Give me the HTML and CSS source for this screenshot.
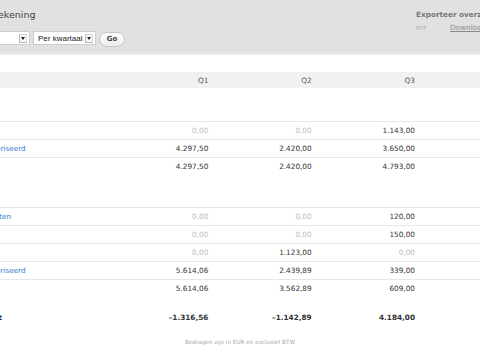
FILE: index.html
```html
<!DOCTYPE html>
<html lang="nl">

<head>
    <meta charset="UTF-8">
    <meta name="viewport" content="width=device-width, initial-scale=1.0">
    <title>Winst- en verliesrekening</title>
    <link rel="stylesheet" href="styles.css">
</head>

<body>
    <div class="page">
        <!-- Top bar with filters and export -->
        <header class="top">
            <div class="top-main">
                <h1 class="title">Winst- en verliesrekening</h1>
                <div class="filters">
                    <span class="select select-year"><span class="select-text">Boekjaar 2012</span><span class="select-arrow"></span></span>
                    <span class="select select-period"><span class="select-text">Per kwartaal</span><span class="select-arrow"></span></span>
                    <button type="button" class="btn">Go</button>
                </div>
            </div>
            <div class="export">
                <div class="export-title">Exporteer overzicht</div>
                <div class="export-row">
                    <span class="export-type">PDF</span>
                    <a href="#" class="export-link">Download</a>
                </div>
            </div>
        </header>

        <!-- Report table -->
        <div class="report">
            <div class="row row-head">
                <div class="label"></div>
                <div class="val">Q1</div>
                <div class="val">Q2</div>
                <div class="val">Q3</div>
                <div class="val">Q4</div>
                <div class="val">Totaal</div>
            </div>

            <div class="row row-section row-first">
                <div class="label">Omzet</div>
            </div>
            <div class="row row-item">
                <div class="label"><a href="#" class="link">Verkoop</a></div>
                <div class="val zero">0,00</div>
                <div class="val zero">0,00</div>
                <div class="val">1.143,00</div>
                <div class="val zero">0,00</div>
                <div class="val">1.143,00</div>
            </div>
            <div class="row row-item">
                <div class="label"><a href="#" class="link">Ongecategoriseerd</a></div>
                <div class="val">4.297,50</div>
                <div class="val">2.420,00</div>
                <div class="val">3.650,00</div>
                <div class="val zero">0,00</div>
                <div class="val">10.367,50</div>
            </div>
            <div class="row row-total">
                <div class="label">Totaal</div>
                <div class="val">4.297,50</div>
                <div class="val">2.420,00</div>
                <div class="val">4.793,00</div>
                <div class="val zero">0,00</div>
                <div class="val">11.510,50</div>
            </div>

            <div class="row row-section">
                <div class="label">Kosten</div>
            </div>
            <div class="row row-item">
                <div class="label"><a href="#" class="link">Overige kosten</a></div>
                <div class="val zero">0,00</div>
                <div class="val zero">0,00</div>
                <div class="val">120,00</div>
                <div class="val zero">0,00</div>
                <div class="val">120,00</div>
            </div>
            <div class="row row-item">
                <div class="label"><a href="#" class="link">Huur</a></div>
                <div class="val zero">0,00</div>
                <div class="val zero">0,00</div>
                <div class="val">150,00</div>
                <div class="val zero">0,00</div>
                <div class="val">150,00</div>
            </div>
            <div class="row row-item">
                <div class="label"><a href="#" class="link">Reiskosten</a></div>
                <div class="val zero">0,00</div>
                <div class="val">1.123,00</div>
                <div class="val zero">0,00</div>
                <div class="val zero">0,00</div>
                <div class="val">1.123,00</div>
            </div>
            <div class="row row-item">
                <div class="label"><a href="#" class="link">Ongecategoriseerd</a></div>
                <div class="val">5.614,06</div>
                <div class="val">2.439,89</div>
                <div class="val">339,00</div>
                <div class="val zero">0,00</div>
                <div class="val">8.392,95</div>
            </div>
            <div class="row row-total">
                <div class="label">Totaal</div>
                <div class="val">5.614,06</div>
                <div class="val">3.562,89</div>
                <div class="val">609,00</div>
                <div class="val zero">0,00</div>
                <div class="val">9.785,95</div>
            </div>

            <div class="row row-grand">
                <div class="label">Nettoresultaat</div>
                <div class="val">–1.316,56</div>
                <div class="val">–1.142,89</div>
                <div class="val">4.184,00</div>
                <div class="val">0,00</div>
                <div class="val">1.724,55</div>
            </div>
        </div>

        <p class="note">Bedragen zijn in EUR en exclusief BTW</p>
    </div>
</body>

</html>
```

FILE: styles.css
```css
html,
body {
    overflow: hidden;
}

body {
    margin: 0;
    font-family: "DejaVu Sans", sans-serif;
    font-size: 7.3px;
    color: #333;
    background-color: #fff;
}

/* Page is wider than the window, scrolled a bit to the right */
.page {
    width: 720px;
    margin-left: -120px;
}

/* Top bar */
.top {
    display: flex;
    height: 55px;
    box-sizing: border-box;
    padding: 9px 20px 0 35px;
    background-color: #e1e1e1;
    border-bottom: 2px solid #ebebeb;
}

.top-main {
    flex: 1;
}

.title {
    margin: 0;
    font-size: 9.5px;
    font-weight: normal;
    line-height: 12px;
    color: #444;
    white-space: nowrap;
}

.filters {
    display: flex;
    align-items: center;
    gap: 3px;
    margin-top: 8.5px;
}

.select {
    display: flex;
    align-items: center;
    justify-content: space-between;
    height: 14px;
    box-sizing: border-box;
    padding: 0 2px 0 4px;
    background-color: #fff;
    border: 1px solid #cdcdcd;
    font-family: "Liberation Sans", sans-serif;
    font-size: 8px;
    color: #222;
    white-space: nowrap;
}

.select-year {
    width: 115px;
}

.select-period {
    width: 63px;
}

.select-arrow {
    display: flex;
    align-items: center;
    justify-content: center;
    width: 8px;
    height: 9px;
    box-sizing: border-box;
    background-color: #f6f6f6;
    border: 1px solid #b5b5b5;
    border-top-color: #d6d6d6;
    border-right-color: #d6d6d6;
}

.select-arrow::after {
    content: "";
    border-left: 2px solid transparent;
    border-right: 2px solid transparent;
    border-top: 3px solid #222;
}

.btn {
    width: 26px;
    height: 15px;
    margin-top: 2px;
    padding: 0;
    border: 1px solid #c6c6c6;
    border-radius: 8px;
    background: linear-gradient(#ffffff, #ebebeb);
    font-family: "DejaVu Sans", sans-serif;
    font-size: 7px;
    font-weight: bold;
    color: #444;
}

/* Export box */
.export {
    width: 164px;
    white-space: nowrap;
}

.export-title {
    font-weight: bold;
    line-height: 12px;
    color: #777;
}

.export-row {
    display: flex;
    align-items: center;
    margin-top: 2px;
    line-height: 10px;
}

.export-type {
    width: 34px;
    font-size: 5.5px;
    color: #aaa;
}

.export-link {
    color: #888;
    text-decoration: underline;
}

/* Report table */
.report {
    margin-top: 17px;
}

.row {
    display: grid;
    grid-template-columns: 225px repeat(4, 103.33px) 1fr;
    align-items: center;
    box-sizing: border-box;
    white-space: nowrap;
}

.row-head {
    height: 16px;
    background-color: #f1f1f1;
    color: #555;
}

.row-section {
    height: 32px;
    font-weight: bold;
}

.row-first {
    height: 33px;
}

.row-item,
.row-total {
    height: 18px;
    border-top: 1px solid #e7e7e7;
}

.row-total .label,
.row-grand {
    font-weight: bold;
}

.row-grand {
    height: 40px;
}

.label {
    padding-left: 61.5px;
    overflow: hidden;
}

.row-item .label {
    padding-left: 76px;
}

.val {
    text-align: right;
}

.zero {
    color: #bbb;
}

.link {
    color: #3a7ed4;
    text-decoration: none;
}

.note {
    margin: 0;
    text-align: center;
    font-size: 5.7px;
    line-height: 10px;
    color: #aaa;
}
```
